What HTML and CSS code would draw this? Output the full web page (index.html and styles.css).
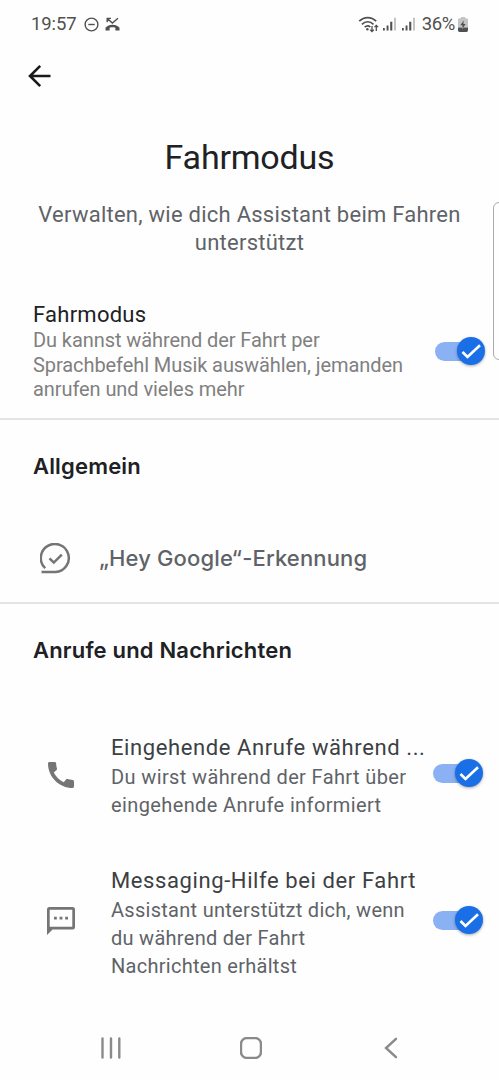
FILE: index.html
```
<!DOCTYPE html>
<html lang="de">
<head>
	<meta charset="UTF-8">
	<title>Fahrmodus</title>
	<link rel="stylesheet" href="styles.css">
</head>
<body>
	<div class="statusbar">
		<span class="time">19:57</span>
		<svg class="dnd" width="15" height="15" viewBox="0 0 15 15">
			<circle cx="7.5" cy="7.5" r="6.4"/>
			<path d="M4.3 7.5h6.4"/>
		</svg>
		<svg class="missed" width="15" height="14" viewBox="0 0 15 14">
			<path class="line" d="M2.2 5.2V1.4H6M2.4 1.6l5 4.4L13 1.2"/>
			<path d="M.5 13.500V10.800C2.200 8.600 4.600 7.700 7.500 7.700s5.300.9 7 3.100v2.700H10.400V10.700C8.500 10.200 6.500 10.200 4.600 10.700v2.800z"/>
		</svg>
		<div class="status-right">
			<svg class="wifi" width="22" height="17" viewBox="0 0 22 17">
				<path d="M1.200 5.200C6.200.4 13.200.4 18.200 5.200M3.900 8.300c3.500-3.300 8.100-3.300 11.600 0M6.700 11.200c1.900-1.700 4-1.700 5.600-.2"/>
				<circle cx="9.400" cy="13.300" r="1.200"/>
				<path class="arrows" d="M14 10v5.500M12.200 13.700l1.800 1.800 1.800-1.800M18.300 15V9.300M16.500 11.100l1.800-1.800 1.800 1.800"/>
			</svg>
			<svg class="signal" width="13" height="14" viewBox="0 0 13 14">
				<path d="M0 11h1.800v2.500H0zM3.600 8.500h1.900v5H3.600zM7.200 4.800h2.100v8.700H7.200z"/>
				<path class="off" d="M11 .8h2v12.700h-2z"/>
			</svg>
			<svg class="signal" width="13" height="14" viewBox="0 0 13 14">
				<path d="M0 11h1.800v2.500H0zM3.600 8.500h1.900v5H3.600zM7.200 4.800h2.100v8.700H7.200z"/>
				<path class="off" d="M11 .8h2v12.700h-2z"/>
			</svg>
			<span class="percent">36%</span>
			<svg class="battery" width="10" height="15" viewBox="0 0 10 15">
				<path class="off" d="M3 0h4v1.300h1.500Q10 1.300 10 2.800V10.500H0V2.800Q0 1.300 1.500 1.300H3z"/>
				<path d="M0 10.500h10v2.700Q10 15 8.500 15h-7Q0 15 0 13.200zM5.800 3.500L2.300 8.200h2.200L4 12l3.700-5H5.400z"/>
			</svg>
		</div>
	</div>

	<div class="toolbar">
		<svg class="back" width="24" height="24" viewBox="0 0 24 24">
			<path d="M12.200 1.800L2 12l10.200 10.200M2 12h20.500"/>
		</svg>
	</div>

	<div class="header">
		<h1>Fahrmodus</h1>
		<p>Verwalten, wie dich Assistant beim Fahren<br>unterstützt</p>
	</div>

	<div class="main-setting">
		<div class="text">
			<h2>Fahrmodus</h2>
			<p>Du kannst während der Fahrt per<br>Sprachbefehl Musik auswählen, jemanden<br>anrufen und vieles mehr</p>
		</div>
		<div class="switch">
			<div class="knob">
				<svg width="28" height="28" viewBox="0 0 28 28"><path d="M5.500 15l5 5L23 8.200"/></svg>
			</div>
		</div>
	</div>

	<div class="section general">
		<h3>Allgemein</h3>
		<div class="hotword">
			<svg class="icon" width="31" height="31" viewBox="0 0 31 31">
				<path d="M5.200 25.200A14 14 0 1 1 15.500 29H1.500" />
				<path d="M9.500 15.300l4.300 4.300 8-8"/>
			</svg>
			<span>„Hey Google“-Erkennung</span>
		</div>
	</div>

	<div class="section calls">
		<h3>Anrufe und Nachrichten</h3>
		<div class="item call">
			<svg class="icon filled" width="26" height="26" viewBox="3 3 18 18">
				<path d="M20.010 15.380c-1.230 0-2.420-.2-3.530-.56-.35-.12-.74-.03-1.010.24l-1.570 1.970c-2.830-1.350-5.480-3.900-6.890-6.830l1.950-1.660c.27-.28.35-.67.24-1.020-.37-1.110-.56-2.300-.56-3.530 0-.54-.45-.99-.99-.99H4.190C3.650 3 3 3.240 3 3.990 3 13.280 10.730 21 20.010 21c.71 0 .99-.63.99-1.180v-3.450c0-.54-.45-.99-.99-.99z"/>
			</svg>
			<div class="text">
				<h4>Eingehende Anrufe während ...</h4>
				<p>Du wirst während der Fahrt über<br>eingehende Anrufe informiert</p>
			</div>
			<div class="switch">
				<div class="knob">
					<svg width="28" height="28" viewBox="0 0 28 28"><path d="M5.500 15l5 5L23 8.200"/></svg>
				</div>
			</div>
		</div>
		<div class="item message">
			<svg class="icon filled" width="28" height="28" viewBox="0 0 28 28">
				<path fill-rule="evenodd" d="M2.500 0h23Q28 0 28 2.500V20q0 2.500-2.500 2.500h-20L0 28V2.500Q0 0 2.500 0zM2.700 2.700v17.100h22.600V2.700z"/>
				<path d="M7 9.800h2.800v2.800H7zM12.600 9.800h2.800v2.800h-2.800zM18.200 9.800H21v2.800h-2.800z"/>
			</svg>
			<div class="text">
				<h4>Messaging-Hilfe bei der Fahrt</h4>
				<p>Assistant unterstützt dich, wenn<br>du während der Fahrt<br>Nachrichten erhältst</p>
			</div>
			<div class="switch">
				<div class="knob">
					<svg width="28" height="28" viewBox="0 0 28 28"><path d="M5.500 15l5 5L23 8.200"/></svg>
				</div>
			</div>
		</div>
	</div>

	<div class="navbar">
		<svg width="22" height="22" viewBox="0 0 22 22"><path d="M2.500 1.500v19M11 1.500v19M19.300 1.500v19"/></svg>
		<svg width="22" height="22" viewBox="0 0 22 22"><rect x="1" y="1" width="20" height="20" rx="6"/></svg>
		<svg width="22" height="22" viewBox="0 0 22 22"><path d="M16 1.800L6 11l10 9.200"/></svg>
	</div>

	<div class="edge-handle"></div>
</body>
</html>
```

FILE: styles.css
```
*{
	margin:0;
	padding:0;
	box-sizing:border-box;
}

body{
	position:relative;
	width:499px;
	height:1080px;
	overflow:hidden;
	display:flex;
	flex-direction:column;
	background:#fefefe;
	font-family:Roboto,"Noto Sans",sans-serif;
	font-size:20px;
	white-space:nowrap;
}

svg{
	display:block;
	flex:none;
}

/* status bar */
.statusbar{
	height:48px;
	padding:0 31px 0 31px;
	display:flex;
	align-items:center;
	color:#505050;
	fill:#505050;
}

.time{
	font-size:18.5px;
	letter-spacing:-0.1px;
}

.dnd{
	margin-left:7px;
	fill:none;
	stroke:#505050;
	stroke-width:1.4;
}

.missed{
	margin-left:6px;
}

.missed .line{
	fill:none;
	stroke:#505050;
	stroke-width:1.4;
}

.status-right{
	margin-left:auto;
	display:flex;
	align-items:center;
}

.wifi path{
	fill:none;
	stroke:#505050;
	stroke-width:1.7;
}

.wifi .arrows{
	stroke-width:1.3;
}

.signal{
	margin-left:6px;
}

.wifi + .signal{
	margin-left:3px;
}

.off{
	fill:#c4c4c4;
}

.percent{
	margin-left:7px;
	font-size:18.5px;
	letter-spacing:-0.4px;
}

.battery{
	margin-left:3px;
}

.toolbar{
	height:89px;
	padding:16px 28px;
}

.back{
	fill:none;
	stroke:#1a1a1a;
	stroke-width:2.6;
}

/* title */
.header{
	height:165px;
	text-align:center;
}

h1{
	font-size:34px;
	font-weight:400;
	line-height:40px;
	letter-spacing:-0.2px;
	color:#202124;
}

.header p{
	margin-top:24px;
	font-size:22px;
	line-height:28px;
	letter-spacing:0.25px;
	color:#5f6368;
}

.main-setting{
	height:118px;
	padding:0 14px 0 33px;
	display:flex;
	justify-content:space-between;
	border-bottom:2px solid #e4e4e4;
}

h2{
	font-size:22px;
	font-weight:400;
	line-height:26px;
	letter-spacing:0.25px;
	color:#202124;
}

.main-setting p{
	line-height:24.5px;
	letter-spacing:-0.08px;
	color:#808080;
}

/* switch */
.switch{
	position:relative;
	flex:none;
	width:50px;
	height:28px;
	display:flex;
	justify-content:flex-end;
}

.switch:before{
	content:"";
	position:absolute;
	left:0;
	top:4.5px;
	width:44px;
	height:19px;
	border-radius:10px;
	background:#8ab1f4;
}

.knob{
	position:relative;
	width:28px;
	height:28px;
	border-radius:50%;
	background:#1a6fe6;
	box-shadow:0 1px 3px rgba(0,0,0,0.35);
}

.knob path{
	fill:none;
	stroke:#fff;
	stroke-width:2.6;
}

.main-setting .switch{
	margin-top:35px;
}

/* sections */
h3{
	font-family:Inter,Roboto,sans-serif;
	font-size:22px;
	font-weight:600;
	line-height:26px;
	letter-spacing:0.18px;
	color:#202124;
}

.general{
	height:184px;
	padding:33px 33px 0;
	border-bottom:2px solid #e4e4e4;
}

.icon{
	fill:none;
	stroke:#757575;
	stroke-width:2.5;
}

.filled{
	fill:#757575;
	stroke:none;
}

.hotword{
	margin-top:64px;
	padding-left:7px;
	display:flex;
	align-items:center;
	font-family:Inter,Roboto,sans-serif;
	font-size:22px;
	font-weight:500;
	letter-spacing:0.14px;
	color:#5f6368;
}

.hotword span{
	margin-left:28px;
	margin-bottom:2px;
	line-height:26px;
}

.calls{
	flex:1;
	padding:33px 16px 0 33px;
}

.item{
	display:flex;
	align-items:flex-start;
}

.item .text{
	flex:1;
	margin-left:37px;
}

h4{
	font-size:22px;
	font-weight:400;
	line-height:26px;
	letter-spacing:0.6px;
	color:#3c4043;
}

.item p{
	margin-top:2px;
	line-height:28px;
	letter-spacing:0.38px;
	color:#5f6368;
}

.call{
	margin-top:72px;
}

.call .icon{
	margin:27px 0 0 15px;
}

.call .switch{
	margin-top:24px;
}

.message{
	margin-top:49px;
}

.message .icon{
	margin:39px 0 0 14px;
}

.message .text{
	margin-left:36px;
}

.message p{
	letter-spacing:0.28px;
}

.message .switch{
	margin-top:38px;
}

/* android navigation */
.navbar{
	height:64px;
	padding:0 97px 0 100px;
	display:flex;
	align-items:center;
	justify-content:space-between;
	fill:none;
	stroke:#8a8a8a;
	stroke-width:2.4;
	stroke-linecap:round;
}

.edge-handle{
	position:absolute;
	left:493px;
	top:202px;
	width:20px;
	height:158px;
	border:1.5px solid #aaa;
	border-radius:6px;
}
```
